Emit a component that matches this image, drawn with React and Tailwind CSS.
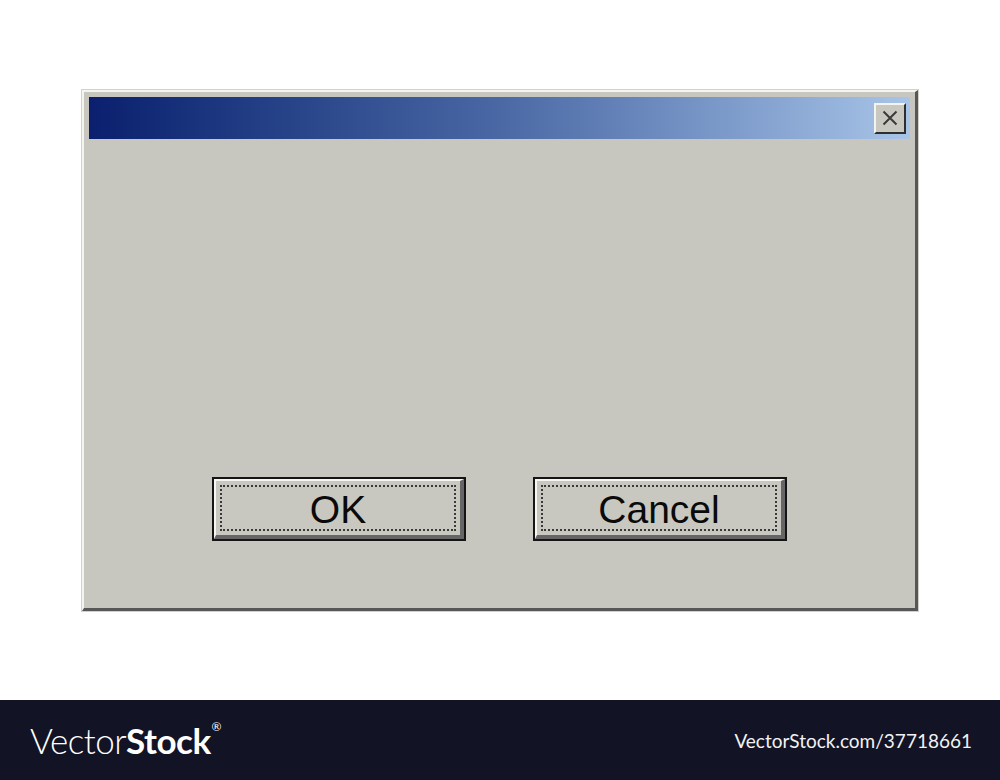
// Retro dialog box with VectorStock footer
import React from 'react';

const RetroButton = ({ label }) => (
  <button className="w-[254px] h-[64px] border-2 border-[#151515] bg-[#c8c8c0] p-0">
    <div className="h-full w-full border-t-2 border-l-2 border-r-4 border-b-4 border-t-[#f7f7f2] border-l-[#f7f7f2] border-r-[#666] border-b-[#666] p-[4px]">
      <div className="h-full w-full border-2 border-dotted border-[#3a3a3a] flex items-center justify-center pt-[3px]">
        <span className="text-[39px] leading-none text-[#0a0a0a] font-['Liberation_Sans',Arial,sans-serif]">
          {label}
        </span>
      </div>
    </div>
  </button>
);

const CloseButton = () => (
  <div className="w-[32px] h-[31px] bg-[#c8c8c0] border-t-2 border-l-2 border-r-2 border-b-2 border-t-[#f4f4ee] border-l-[#f4f4ee] border-r-[#2e2e2e] border-b-[#2e2e2e] flex items-center justify-center">
    <svg width="18" height="18" viewBox="0 0 18 18">
      <path d="M2.5 2.5 L15.5 15.5 M15.5 2.5 L2.5 15.5" stroke="#3a3a3a" strokeWidth="2" />
    </svg>
  </div>
);

export default function App() {
  return (
    <div className="w-[1000px] h-[780px] flex flex-col bg-white">
      {/* Dialog area */}
      <div className="h-[700px] pt-[89px] pl-[81px]">
        <div className="w-[838px] h-[523px] border border-[#d2d2ca]">
          <div className="h-full border-t-2 border-l-2 border-r-[3px] border-b-[3px] border-t-[#f5f5ef] border-l-[#f5f5ef] border-r-[#575757] border-b-[#575757] bg-[#c8c7bf] p-[5px] flex flex-col">
            {/* Title bar */}
            <div className="h-[42px] bg-linear-to-r from-[#0b1f6e] via-[#4a68a4] to-[#a8c4e8] flex items-center justify-end pr-[4px]">
              <CloseButton />
            </div>
            {/* Body */}
            <div className="flex-1 flex justify-center items-start gap-[67px] pt-[338px]">
              <RetroButton label="OK" />
              <RetroButton label="Cancel" />
            </div>
          </div>
        </div>
      </div>

      {/* Footer */}
      <div className="h-[80px] bg-[#121325] flex items-center justify-between pl-[30px] pr-[28px] font-['Lato',sans-serif] text-white">
        <div className="flex items-start text-[35px] leading-none tracking-[-0.5px]">
          <span className="font-light">Vector</span>
          <span className="font-bold">Stock</span>
          <span className="text-[12px] ml-[1px] -mt-[2px]">®</span>
        </div>
        <div className="text-[19px] text-[#f2f2f2] pt-[2px]">VectorStock.com/37718661</div>
      </div>
    </div>
  );
}
